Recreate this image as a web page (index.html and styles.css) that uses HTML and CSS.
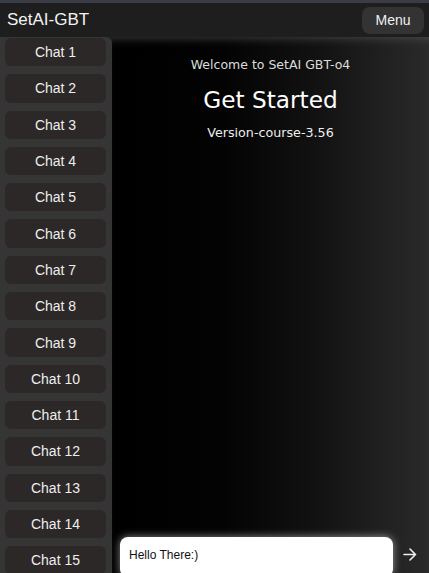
FILE: index.html
```html
<!DOCTYPE html>
<html lang="en">
<head>
    <meta charset="UTF-8">
    <meta name="viewport" content="width=device-width, initial-scale=1.0">
    <title>SetAI-GBT</title>
    <link rel="stylesheet" href="styles.css">
</head>
<body>
    <div class="topbar">
        <div class="brand">SetAI-GBT</div>
        <button class="menu-btn">Menu</button>
    </div>

    <div class="layout">
        <div class="sidebar">
            <button class="chat-btn">Chat 1</button>
            <button class="chat-btn">Chat 2</button>
            <button class="chat-btn">Chat 3</button>
            <button class="chat-btn">Chat 4</button>
            <button class="chat-btn">Chat 5</button>
            <button class="chat-btn">Chat 6</button>
            <button class="chat-btn">Chat 7</button>
            <button class="chat-btn">Chat 8</button>
            <button class="chat-btn">Chat 9</button>
            <button class="chat-btn">Chat 10</button>
            <button class="chat-btn">Chat 11</button>
            <button class="chat-btn">Chat 12</button>
            <button class="chat-btn">Chat 13</button>
            <button class="chat-btn">Chat 14</button>
            <button class="chat-btn">Chat 15</button>
        </div>

        <div class="main">
            <div class="intro">
                <p class="welcome">Welcome to SetAI GBT-o4</p>
                <h1>Get Started</h1>
                <p class="version">Version-course-3.56</p>
            </div>

            <div class="composer">
                <input type="text" class="prompt" value="Hello There:)">
                <button class="send-btn">
                    <svg width="14" height="13" viewBox="0 0 14 13">
                        <path d="M1 6.5H12.5M7 1L12.5 6.5L7 12" fill="none" stroke="#eee" stroke-width="1.6" stroke-linecap="round" stroke-linejoin="round"/>
                    </svg>
                </button>
            </div>
        </div>
    </div>
</body>
</html>
```

FILE: styles.css
```css
body {
    font-family: "Liberation Sans", Arial, sans-serif;
    background-color: #1e1e1e;
    margin: 0;
    height: 100vh;
    display: flex;
    flex-direction: column;
    overflow: hidden;
    color: #eee;
}

/* Header */
.topbar {
    border-top: 3px solid #3a3d45;
    background-color: #1e1e1e;
    height: 34px;
    display: flex;
    justify-content: space-between;
    align-items: center;
    padding: 0 5px 0 7px;
    flex-shrink: 0;
}
.brand {
    font-size: 17px;
    color: #f2f2f2;
}
.menu-btn {
    background-color: #333;
    color: #f0f0f0;
    border: none;
    border-radius: 8px;
    width: 62px;
    height: 27px;
    font-family: inherit;
    font-size: 14px;
    cursor: pointer;
}

.layout {
    flex: 1;
    display: flex;
    min-height: 0;
}

/* Chat list */
.sidebar {
    width: 112px;
    background-color: #353535;
    border-top-right-radius: 6px;
    padding: 1px 6px 0 5px;
    box-sizing: border-box;
    display: flex;
    flex-direction: column;
    gap: 8px;
    overflow: hidden;
    flex-shrink: 0;
}
.chat-btn {
    flex-shrink: 0;
    height: 28.3px;
    background-color: #2b2827;
    color: #eee;
    border: none;
    border-radius: 6px;
    font-family: inherit;
    font-size: 14px;
    cursor: pointer;
}

/* Main area */
.main {
    flex: 1;
    display: flex;
    flex-direction: column;
    justify-content: space-between;
    background: linear-gradient(to right, #000 0%, #030303 35%, #121212 65%, #2a2a2a 100%);
    box-shadow: inset 0 8px 8px -6px rgba(90, 90, 90, 0.6);
    font-family: "DejaVu Sans", Verdana, sans-serif;
    text-align: center;
}
.intro {
    padding-top: 20px;
}
.welcome {
    margin: 0;
    font-size: 12.5px;
    color: #ddd;
}
h1 {
    margin: 14px 0 0;
    font-size: 23.2px;
    font-weight: normal;
    color: #fff;
}
.version {
    margin: 12px 0 0;
    font-size: 12.7px;
    color: #eee;
}

.composer {
    display: flex;
    align-items: center;
    padding: 0 0 0 8px;
    margin-bottom: -4px;
}
.prompt {
    flex: 1;
    height: 36px;
    border: none;
    border-radius: 8px;
    padding: 0 9px 4px;
    background: #fff;
    box-shadow: 0 0 9px rgba(255, 255, 255, 0.55);
    font-family: "Liberation Sans", Arial, sans-serif;
    font-size: 12px;
    color: #111;
    outline: none;
}
.send-btn {
    width: 36px;
    background: none;
    border: none;
    padding: 0 3px 5px 0;
    display: flex;
    justify-content: center;
    cursor: pointer;
}
```
